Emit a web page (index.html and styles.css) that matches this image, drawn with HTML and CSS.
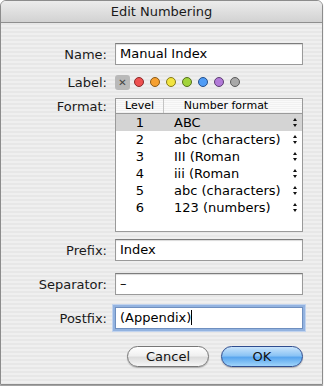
FILE: index.html
```html
<!DOCTYPE html>
<html lang="en">
<head>
  <meta charset="UTF-8" />
  <title>Edit Numbering</title>
  <link rel="stylesheet" href="styles.css">
</head>
<body>
  <div class="window">
    <div class="titlebar">Edit Numbering</div>

    <div class="content">
      <div class="row row-name">
        <label class="label">Name:</label>
        <div class="field">Manual Index</div>
      </div>

      <div class="row row-label">
        <span class="label">Label:</span>
        <div class="swatches">
          <span class="swatch-none">&#x2715;</span>
          <span class="dot red"></span>
          <span class="dot orange"></span>
          <span class="dot yellow"></span>
          <span class="dot green"></span>
          <span class="dot blue"></span>
          <span class="dot purple"></span>
          <span class="dot gray"></span>
        </div>
      </div>

      <div class="row row-format">
        <span class="label">Format:</span>
        <div class="table">
          <div class="thead">
            <div class="col-level">Level</div>
            <div class="col-format">Number format</div>
          </div>
          <div class="tr selected"><div class="col-level">1</div><div class="col-format">ABC</div><span class="stepper"></span></div>
          <div class="tr"><div class="col-level">2</div><div class="col-format">abc (characters)</div><span class="stepper"></span></div>
          <div class="tr"><div class="col-level">3</div><div class="col-format">III (Roman</div><span class="stepper"></span></div>
          <div class="tr"><div class="col-level">4</div><div class="col-format">iii (Roman</div><span class="stepper"></span></div>
          <div class="tr"><div class="col-level">5</div><div class="col-format">abc (characters)</div><span class="stepper"></span></div>
          <div class="tr"><div class="col-level">6</div><div class="col-format">123 (numbers)</div><span class="stepper"></span></div>
        </div>
      </div>

      <div class="row row-prefix">
        <span class="label">Prefix:</span>
        <div class="field">Index</div>
      </div>

      <div class="row row-sep">
        <span class="label">Separator:</span>
        <div class="field">&ndash;</div>
      </div>

      <div class="row row-postfix">
        <span class="label">Postfix:</span>
        <div class="field focused">(Appendix)<span class="caret"></span></div>
      </div>

      <div class="buttons">
        <button class="btn">Cancel</button>
        <button class="btn btn-default">OK</button>
      </div>
    </div>
  </div>
</body>
</html>
```

FILE: styles.css
```css
* {
  margin: 0;
  padding: 0;
  box-sizing: border-box;
}
body {
  width: 324px;
  height: 386px;
  background: #ffffff;
  font-family: "DejaVu Sans", "Liberation Sans", sans-serif;
  font-size: 12px;
  color: #000;
  overflow: hidden;
}
.window {
  width: 323px;
  height: 385px;
  border: 1px solid #8c8c8c;
  border-radius: 6px 6px 0 0;
  overflow: hidden;
  background: repeating-linear-gradient(to bottom, #efefef 0, #efefef 2px, #e7e7e7 2px, #e7e7e7 4px);
  box-shadow: 0 1px 1px rgba(0,0,0,0.4);
}
.titlebar {
  height: 22px;
  line-height: 21px;
  text-align: center;
  font-size: 13px;
  color: #1a1a1a;
  background: linear-gradient(to bottom, #ececec, #d2d2d2);
  border-bottom: 1px solid #8f8f8f;
}
.content {
  padding-top: 20px;
}
.row {
  display: flex;
  align-items: center;
  gap: 8px;
}
.label {
  width: 106px;
  text-align: right;
  font-size: 13px;
  color: #1a1a1a;
}
.field {
  width: 188px;
  height: 22px;
  background: #fff;
  border: 1px solid #9a9a9a;
  border-top-color: #7c7c7c;
  padding: 0 4px;
  line-height: 20px;
  font-size: 13px;
  box-shadow: inset 0 1px 1px rgba(0,0,0,0.15);
}
.field.focused {
  border-color: #6f8fbf;
  box-shadow: 0 0 0 2px #93b3e0, 0 0 0 3px #c1d3ee;
}
.caret {
  display: inline-block;
  width: 1px;
  height: 15px;
  background: #000;
  vertical-align: -3px;
}
.row-label {
  margin-top: 10px;
  height: 14px;
}
.swatches {
  display: flex;
  align-items: center;
  gap: 6px;
}
.swatch-none {
  width: 15px;
  height: 15px;
  background: #b9b9b9;
  border-radius: 3px;
  font-size: 10px;
  line-height: 15px;
  text-align: center;
  color: #444;
  margin-right: -2px;
}
.dot {
  width: 10px;
  height: 10px;
  border-radius: 50%;
  border: 1px solid #555;
}
.red { background: #ee5050; border-color: #8a2a2a; }
.orange { background: #f6a030; border-color: #8a5a18; }
.yellow { background: #f2e440; border-color: #857a1a; }
.green { background: #a2d43a; border-color: #566f1e; }
.blue { background: #4f9cf6; border-color: #27508a; }
.purple { background: #b27ad8; border-color: #5d3f72; }
.gray { background: #a8a8a8; border-color: #5a5a5a; }
.row-format {
  margin-top: 9px;
  align-items: flex-start;
}
.row-format .label {
  padding-top: 1px;
}
.table {
  width: 188px;
  height: 134px;
  background: #fff;
  border: 1px solid #9a9a9a;
  font-size: 13px;
}
.thead {
  display: flex;
  height: 15px;
  line-height: 14px;
  font-size: 11px;
  background: repeating-linear-gradient(to bottom, #fafafa 0, #fafafa 1px, #f1f1f1 1px, #f1f1f1 2px);
  border-bottom: 1px solid #9a9a9a;
}
.thead .col-level {
  border-right: 1px solid #c4c4c4;
}
.col-level {
  width: 48px;
  text-align: center;
}
.col-format {
  flex: 1;
}
.thead .col-format {
  text-align: center;
  padding-right: 14px;
}
.tr {
  display: flex;
  align-items: center;
  height: 17px;
}
.tr .col-format {
  padding-left: 10px;
}
.tr.selected {
  background: #d4d4d4;
}
.stepper {
  position: relative;
  width: 12px;
  height: 17px;
}
.stepper::before,
.stepper::after {
  content: "";
  position: absolute;
  left: 3px;
  border-left: 2.5px solid transparent;
  border-right: 2.5px solid transparent;
}
.stepper::before {
  top: 4px;
  border-bottom: 3px solid #111;
}
.stepper::after {
  top: 10px;
  border-top: 3px solid #111;
}
.row-prefix {
  margin-top: 7px;
}
.row-sep {
  margin-top: 12px;
}
.row-postfix {
  margin-top: 12px;
}
.buttons {
  display: flex;
  justify-content: flex-end;
  gap: 12px;
  padding-right: 19px;
  margin-top: 17px;
}
.btn {
  width: 82px;
  height: 21px;
  border-radius: 11px;
  font-family: "DejaVu Sans", "Liberation Sans", sans-serif;
  font-size: 13px;
  color: #111;
  border: 1px solid #777;
  background: linear-gradient(to bottom, #ffffff 0%, #f0f0f0 45%, #dcdcdc 55%, #f6f6f6 100%);
  box-shadow: 0 1px 1px rgba(0,0,0,0.25);
}
.btn-default {
  border-color: #2f4d8f;
  background: linear-gradient(to bottom, #c9e4fb 0%, #8cc4f5 45%, #5aa6ee 55%, #9fd4fa 100%);
}
```
